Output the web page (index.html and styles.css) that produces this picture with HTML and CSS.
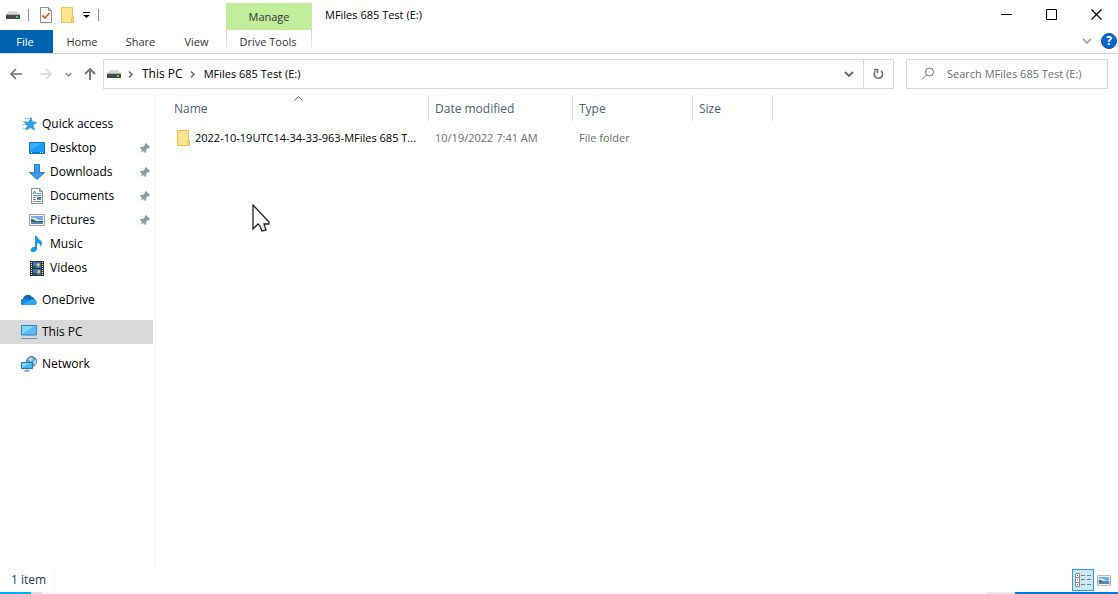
FILE: index.html
```html
<!DOCTYPE html>
<html lang="en">
<head>
    <meta charset="UTF-8">
    <meta name="viewport" content="width=device-width, initial-scale=1.0">
    <title>MFiles 685 Test (E:)</title>
    <link rel="stylesheet" href="styles.css">
</head>
<body>

<!-- Shared icons -->
<svg class="sprite" aria-hidden="true">
    <symbol id="drive" viewBox="0 0 14 8">
        <path d="M3 0h8l3 4H0z" fill="#d6d6d6"/>
        <path d="M0 4h14v4H0z" fill="#484848"/>
        <path d="M0 3h14v1H0z" fill="#b0b0b0"/>
        <path d="M10 5h2v2h-2z" fill="#2ee64a"/>
    </symbol>
    <symbol id="folder" viewBox="0 0 13 16">
        <path d="M.5.5h11v9.500h1v5.500H.5z" fill="#ffe48f" stroke="#e9c34c"/>
        <path d="M10.500 15.500V11q0-1 1-1t1 1v4.500z" fill="#ffe48f" stroke="#e9c34c"/>
    </symbol>
    <symbol id="pin" viewBox="0 0 10 10">
        <path d="M6 0l4 4-1 1-1 0-2 2 0 2-1 1-2-2-3 2 2-3-2-2 1-1h2l2-2V1z" fill="#8f9ca6"/>
    </symbol>
    <symbol id="picture" viewBox="0 0 16 12">
        <path d="M.5.5h15v11H.5z" fill="#fff" stroke="#a0a0a0"/>
        <path d="M2 2h12v8H2z" fill="#6fb0ea"/>
        <path d="M2 4q4-1 6 1t6 1v1H2z" fill="#d8edf7"/>
        <path d="M2 5q3 0 5 2h7v1H2z" fill="#38684f"/>
        <path d="M2 8h12v2H2z" fill="#4f86b8"/>
    </symbol>
    <symbol id="chevron-right" viewBox="0 0 5 7">
        <path d="M1 .5l3 3-3 3" fill="none" stroke="#6a6a6a" stroke-width="1.500"/>
    </symbol>
    <symbol id="chevron-down" viewBox="0 0 10 6">
        <path d="M1 1l4 4 4-4" fill="none" stroke="currentColor" stroke-width="1.800"/>
    </symbol>
</svg>

<div class="explorer">
    <header class="top">
        <div class="top-left">
            <div class="quick-bar">
                <svg class="drive" aria-hidden="true"><use href="#drive"/></svg>
                <span class="divider"></span>
                <div class="quick-buttons">
                    <button class="plain" aria-label="Properties">
                        <svg width="12" height="16" viewBox="0 0 12 16">
                            <path d="M.5.5h8l3 3v12H.5z" fill="#f8f8f8" stroke="#8f8f8f"/>
                            <path d="M8.500.5v3h3" fill="none" stroke="#8f8f8f"/>
                            <path d="M2.500 8.500l2.500 2.500 4.500-5" fill="none" stroke="#ea5b1c" stroke-width="1.800"/>
                        </svg>
                    </button>
                    <button class="plain" aria-label="New folder"><svg class="folder"><use href="#folder"/></svg></button>
                    <button class="plain" aria-label="Customize Quick Access Toolbar">
                        <svg width="7" height="6" viewBox="0 0 7 6"><path d="M0 0h7v1H0zM0 3h7L3.500 6z"/></svg>
                    </button>
                </div>
                <span class="divider"></span>
            </div>
            <nav class="tabs">
                <button class="tab file">File</button>
                <button class="tab home">Home</button>
                <button class="tab share">Share</button>
                <button class="tab view">View</button>
            </nav>
        </div>
        <div class="context-tabs">
            <div class="manage">Manage</div>
            <button class="tab drive-tools">Drive Tools</button>
        </div>
        <div class="top-right">
            <div class="title-row">
                <h1>MFiles 685 Test (E:)</h1>
                <div class="window-buttons">
                    <button class="plain" aria-label="Minimize"><svg width="11" height="11" viewBox="0 0 11 11"><path d="M0 5.500h11" stroke="#000"/></svg></button>
                    <button class="plain" aria-label="Maximize"><svg width="11" height="11" viewBox="0 0 11 11"><path d="M.5.5h10v10H.5z" fill="none" stroke="#000"/></svg></button>
                    <button class="plain" aria-label="Close"><svg width="11" height="11" viewBox="0 0 11 11"><path d="M.5.5l10 10M10.500.5l-10 10" stroke="#000" stroke-width="1.200"/></svg></button>
                </div>
            </div>
            <div class="ribbon-end">
                <button class="plain expand" aria-label="Expand the Ribbon"><svg class="chevron"><use href="#chevron-down"/></svg></button>
                <button class="plain help" aria-label="Help">?</button>
            </div>
        </div>
    </header>

    <div class="address-row">
        <div class="history">
            <button class="plain" aria-label="Back">
                <svg width="12" height="12" viewBox="0 0 12 12"><path d="M12 6H1M6 1L1 6l5 5" fill="none" stroke="#777" stroke-width="1.700"/></svg>
            </button>
            <button class="plain" aria-label="Forward">
                <svg width="12" height="12" viewBox="0 0 12 12"><path d="M0 6h11M6 1l5 5-5 5" fill="none" stroke="#d8d8d8" stroke-width="1.500"/></svg>
            </button>
            <button class="plain recent" aria-label="Recent locations"><svg width="7" height="5"><use href="#chevron-down"/></svg></button>
            <button class="plain" aria-label="Up">
                <svg width="12" height="12" viewBox="0 0 12 12"><path d="M6 12V1M1 6l5-5 5 5" fill="none" stroke="#777" stroke-width="2"/></svg>
            </button>
        </div>
        <div class="address">
            <svg class="drive" aria-hidden="true"><use href="#drive"/></svg>
            <svg class="crumb-arrow"><use href="#chevron-right"/></svg>
            <a href="#">This PC</a>
            <svg class="crumb-arrow"><use href="#chevron-right"/></svg>
            <a href="#">MFiles 685 Test (E:)</a>
            <button class="plain previous" aria-label="Previous locations"><svg class="chevron"><use href="#chevron-down"/></svg></button>
            <button class="plain refresh" aria-label="Refresh">
                <svg width="11" height="12" viewBox="0 0 11 12"><path d="M2.500 3A4.200 4.200 0 1 0 8 2.800M1 1.500h3.500V5" fill="none" stroke="#707070" stroke-width="1.600"/></svg>
            </button>
        </div>
        <label class="search">
            <svg width="14" height="14" viewBox="0 0 14 14" aria-hidden="true"><circle cx="8.500" cy="5" r="4" fill="none" stroke="#6d6d6d"/><path d="M5.500 8L1 12.500" stroke="#6d6d6d"/></svg>
            <input type="text" placeholder="Search MFiles 685 Test (E:)" aria-label="Search">
        </label>
    </div>

    <div class="content">
        <nav class="sidebar">
            <a class="item quick" href="#">
                <svg width="16" height="16" viewBox="0 0 16 16"><path d="M10 1.500l1.300 4.500 4.200.3-3.500 3L13.500 14l-4-2.500L5 14l1.500-4.500-3-3h4z" fill="#2fa3ea" stroke="#1681c8" stroke-width=".7"/><path d="M4 2.500h4M2 5.500h4M1 8.500h4M2 12.500h3" stroke="#86c9f3"/></svg>
                <span>Quick access</span>
            </a>
            <a class="item sub" href="#">
                <svg width="16" height="16" viewBox="0 0 16 16"><path d="M.5 2.500h15v11H.5z" fill="#1b9cf2" stroke="#0b77c9"/><path d="M1 11L13 3H1z" fill="#35b1fb"/><path d="M1 12.500h14" stroke="#0b77c9"/><path d="M2 12.500h1M11 12.500h1M13 12.500h1" stroke="#cdeaff"/></svg>
                <span>Desktop</span><svg class="pin"><use href="#pin"/></svg>
            </a>
            <a class="item sub" href="#">
                <svg width="16" height="16" viewBox="0 0 16 16"><path d="M5.500.5h5v8h5L8 15.500.5 8.500h5z" fill="#3b9bea" stroke="#247fce"/></svg>
                <span>Downloads</span><svg class="pin"><use href="#pin"/></svg>
            </a>
            <a class="item sub" href="#">
                <svg width="16" height="16" viewBox="0 0 16 16"><path d="M2.500.5h8l3 3v12h-11z" fill="#fff" stroke="#909090"/><path d="M10.500.5v3h3" fill="none" stroke="#909090"/><path d="M8 5.500h4M4 7.500h8" stroke="#4f9bd2"/><path d="M4 9.500h3M4 11.500h3M4 13.500h8" stroke="#8a8a8a"/><path d="M8 9h4v2H8z" fill="#2c83c6"/><path d="M8 11h4v1H8z" fill="#4ba274"/><path d="M4 6l1.500-3L7 6" fill="none" stroke="#2c83c6"/></svg>
                <span>Documents</span><svg class="pin"><use href="#pin"/></svg>
            </a>
            <a class="item sub" href="#">
                <svg width="16" height="16"><use href="#picture"/></svg>
                <span>Pictures</span><svg class="pin"><use href="#pin"/></svg>
            </a>
            <a class="item sub" href="#">
                <svg width="16" height="16" viewBox="0 0 16 16"><path d="M6 0h2c0 3 5 4 5 7 0 2-1 3-2 4 1-3-1-4-3-4v6c0 2-2 3-4 3s-3-1-2-3 2-2 4-2z" fill="#129bed"/></svg>
                <span>Music</span>
            </a>
            <a class="item sub" href="#">
                <svg width="16" height="16" viewBox="0 0 16 16"><path d="M1 1h14v15H1z" fill="#333"/><path d="M2.500 2v14M13.500 2v14" stroke="#eee" stroke-dasharray="1 1"/><path d="M4 2h8v6H4zM4 9h8v6H4z" fill="#3478ce"/><path d="M7 4l3-1 1 2-2 2zM9 10h2v3H8z" fill="#f4c431"/><path d="M4 6h3v2H4zM4 13h4v2H4z" fill="#235c47"/></svg>
                <span>Videos</span>
            </a>
            <a class="item root" href="#">
                <svg width="16" height="16" viewBox="0 0 16 16"><path d="M3 13a3 3 0 0 1-1-6 5 5 0 0 1 9-2 4 4 0 0 1 3 3c2 1 2 5-1 5z" fill="#0c65b8"/><path d="M2 7q3-2 6 1l6 4-1 1H3a3 3 0 0 1-1-6" fill="#1788dc"/><path d="M2 12l7-4 2-1q4 0 5 4-1 2-3 2H3z" fill="#2caaf0"/></svg>
                <span>OneDrive</span>
            </a>
            <a class="item root selected" href="#" aria-current="page">
                <svg width="16" height="16" viewBox="0 0 16 16"><path d="M.5 1.500h15v9.500H.5z" fill="#59bdf5" stroke="#2b83b9"/><path d="M1 10.500L13 2H1z" fill="#80d4fa"/><path d="M6 11h4v1H6z" fill="#6aa7c8"/><path d="M0 14.500h16" stroke="#6194b5"/></svg>
                <span>This PC</span>
            </a>
            <a class="item root" href="#">
                <svg width="16" height="16" viewBox="0 0 16 16"><circle cx="10.500" cy="5.500" r="5" fill="#5f9fc4" stroke="#457f9f"/><path d="M7 3l3-2 2 2-2 3zM12 5l3-1v4l-2 1z" fill="#b5d8df"/><path d="M.5 6.500h11v6H.5z" fill="#4db6ef" stroke="#1777ad"/><path d="M1 12l8-5H1z" fill="#83d3fb"/><path d="M3 15h6M6 13v2" stroke="#3c83aa"/></svg>
                <span>Network</span>
            </a>
        </nav>

        <main class="files">
            <table>
                <thead>
                    <tr>
                        <th class="name">Name
                            <svg class="sort" width="9" height="5" viewBox="0 0 9 5"><path d="M.5 4.500l4-4 4 4" fill="none" stroke="#666"/></svg>
                        </th>
                        <th class="date">Date modified</th>
                        <th class="type">Type</th>
                        <th class="size">Size</th>
                    </tr>
                </thead>
                <tbody>
                    <tr>
                        <td><a class="file-name" href="#"><svg class="folder"><use href="#folder"/></svg><span>2022-10-19UTC14-34-33-963-MFiles 685 T...</span></a></td>
                        <td>10/19/2022 7:41 AM</td>
                        <td>File folder</td>
                        <td></td>
                    </tr>
                </tbody>
            </table>
            <svg class="cursor" width="19" height="28" viewBox="0 0 19 28"><path d="M1 1v24l5-5 2 2 2 5 4-1-2-6h5v-2z" fill="#fff" stroke="#24232d" stroke-width="1.300"/></svg>
        </main>
    </div>

    <footer class="status-bar">
        <span class="count">1 item</span>
        <div class="view-buttons">
            <button class="plain active" aria-label="Details view">
                <svg width="16" height="14" viewBox="0 0 16 14"><path d="M.5.5h4v13h-4zM.5 4.500h4M.5 9.500h4" fill="#fff" stroke="#8d8d8d"/><path d="M2 2h1v1H2z" fill="#444"/><path d="M2 6h1v1H2z" fill="#2868dd"/><path d="M2 11h1v1H2z" fill="#c22"/><path d="M6 2.500h4M12 2.500h4M6 6.500h4M12 6.500h4M6 11.500h4M12 11.500h4" stroke="#7c7c7c"/></svg>
            </button>
            <button class="plain" aria-label="Large icons view"><svg class="thumb"><use href="#picture"/></svg></button>
        </div>
    </footer>
    <div class="taskbar">
        <span class="start"></span>
        <span class="edge"></span>
        <span class="tray"></span>
        <span class="accent"></span>
    </div>
</div>

</body>
</html>
```

FILE: styles.css
```css
* {
    box-sizing: border-box;
}

body {
    margin: 0;
    font-family: "Open Sans", "Noto Sans", sans-serif;
    font-size: 12px;
    line-height: 16px;
    color: #000;
    background-color: #fff;
}

svg {
    display: block;
    flex: none;
}

a {
    color: inherit;
    text-decoration: none;
}

button,
input {
    font: inherit;
    color: inherit;
}

.sprite {
    position: absolute;
    width: 0;
    height: 0;
}

.explorer {
    display: flex;
    flex-direction: column;
    min-height: 100vh;
}

.plain {
    display: flex;
    align-items: center;
    justify-content: center;
    padding: 0;
    border: none;
    background: none;
}

.drive {
    width: 14px;
    height: 8px;
}

.folder {
    width: 13px;
    height: 16px;
}

.chevron {
    width: 10px;
    height: 6px;
}

/* Title bar and ribbon */
.top {
    display: flex;
    height: 54px;
    border-bottom: 1px solid #dadada;
}

.top-left {
    width: 226px;
}

.quick-bar {
    display: flex;
    align-items: center;
    gap: 8px;
    height: 30px;
    padding-left: 6px;
}

.quick-buttons {
    display: flex;
    gap: 9px;
    padding: 0 0 0 3px;
}

.divider {
    width: 1px;
    height: 12px;
    background-color: #8c8c8c;
}

.tabs {
    display: flex;
}

.tab {
    height: 23px;
    padding: 0;
    border: none;
    background: none;
    font-size: 11px;
    color: #333;
    text-align: center;
}

.file {
    width: 53px;
    padding-right: 3px;
    background-color: #0063b1;
    color: #fff;
}

.home {
    width: 58px;
}

.share {
    width: 59px;
}

.view {
    width: 53px;
}

.context-tabs {
    width: 86px;
    padding-top: 3px;
}

.manage {
    height: 27px;
    line-height: 27px;
    font-size: 11px;
    text-align: center;
    color: #333;
    background-color: #c1ee9b;
}

.drive-tools {
    width: 100%;
    height: 18px;
    padding-right: 2px;
    border: solid;
    border-width: 0 1px;
    border-image: linear-gradient(#ccc, #eee) 1;
    line-height: 23px;
}

.top-right {
    flex: 1;
}

.title-row {
    display: flex;
    align-items: center;
    justify-content: space-between;
    height: 30px;
    padding: 0 16px 2px 13px;
}

h1 {
    margin: 0;
    padding-top: 2px;
    font-size: 11px;
    font-weight: 400;
}

.window-buttons {
    display: flex;
    gap: 34px;
}

.ribbon-end {
    display: flex;
    align-items: center;
    justify-content: flex-end;
    gap: 9px;
    height: 22px;
    padding-right: 1px;
}

.expand {
    color: #a8a8a8;
}

.help {
    width: 16px;
    height: 16px;
    border: 1px solid #0a4f9c;
    border-radius: 50%;
    background-color: #0868d0;
    color: #fff;
    font-weight: 700;
}

/* Address bar */
.address-row {
    display: flex;
    padding: 5px 10px 0;
    font-size: 11px;
}

.history {
    display: flex;
    align-items: center;
    justify-content: space-between;
    width: 86px;
    margin-right: 7px;
}

.history .recent {
    color: #777;
}

.history button:nth-child(2) {
    margin-left: 6px;
}

.address {
    display: flex;
    flex: 1;
    align-items: center;
    height: 30px;
    padding-left: 3px;
    border: 1px solid #d9d9d9;
}

.address a:first-of-type {
    font-size: 12px;
}

.crumb-arrow {
    width: 5px;
    height: 7px;
    margin: 0 9px 0 7px;
}

.previous {
    width: 28px;
    margin-left: auto;
    color: #666;
}

.refresh {
    width: 30px;
    height: 28px;
    border-left: 1px solid #d9d9d9;
}

.search {
    display: flex;
    align-items: center;
    gap: 12px;
    width: 202px;
    height: 30px;
    margin-left: 12px;
    padding-left: 14px;
    border: 1px solid #d9d9d9;
}

.search input {
    width: 100%;
    min-width: 0;
    padding: 0;
    border: none;
    outline: none;
    background: none;
}

.search input::placeholder {
    color: #6d6d6d;
    opacity: 1;
}

/* Navigation pane */
.content {
    display: flex;
    flex: 1;
    padding-top: 6px;
}

.sidebar {
    width: 156px;
    padding: 17px 2px 0 0;
    border-right: 1px solid #f2f2f2;
}

.item {
    display: flex;
    align-items: center;
    gap: 5px;
    height: 24px;
    padding-left: 21px;
}

.sub {
    padding-left: 29px;
}

.root {
    margin-top: 8px;
}

.selected {
    background-color: #d9d9d9;
}

.pin {
    width: 10px;
    height: 10px;
    margin: 0 3px 0 auto;
}

/* File list */
.files {
    position: relative;
    flex: 1;
    padding-left: 12px;
}

table {
    width: 605px;
    table-layout: fixed;
    border-collapse: separate;
    border-spacing: 0;
}

th,
td {
    padding: 0 6px;
    text-align: left;
    font-weight: 400;
}

th {
    position: relative;
    height: 27px;
    border-right: 1px solid #e5e5e5;
    color: #4c607a;
}

td {
    height: 32px;
    font-size: 11px;
    color: #6d6d6d;
}

.name {
    width: 261px;
}

.date {
    width: 144px;
}

.type {
    width: 120px;
}

.size {
    width: 80px;
}

.sort {
    position: absolute;
    top: 1px;
    left: 126px;
}

.file-name {
    display: flex;
    align-items: center;
    gap: 5px;
    padding-left: 3px;
    color: #000;
}

.file-name span {
    white-space: nowrap;
}

.cursor {
    position: absolute;
    top: 109px;
    left: 96px;
}

/* Status bar */
.status-bar {
    display: flex;
    align-items: center;
    justify-content: space-between;
    height: 24px;
    padding: 0 4px 0 11px;
    color: #1e395b;
}

.count {
    padding-right: 8px;
    border-right: 1px solid #f2f2f2;
}

.view-buttons {
    display: flex;
}

.view-buttons button {
    width: 20px;
    height: 22px;
}

.view-buttons .active {
    width: 22px;
    border: 1px solid #26a0da;
    background-color: #cce8f6;
}

.thumb {
    width: 14px;
    height: 11px;
}

.taskbar {
    display: flex;
    height: 2px;
    background-color: #f7f7f7;
}

.start {
    width: 31px;
    background-color: #00adef;
}

.edge {
    width: 11px;
    background-color: #ddd;
}

.tray {
    width: 28px;
    margin-left: auto;
    background-color: #e9e9e9;
}

.accent {
    width: 103px;
    background-color: #0078d7;
}
```
